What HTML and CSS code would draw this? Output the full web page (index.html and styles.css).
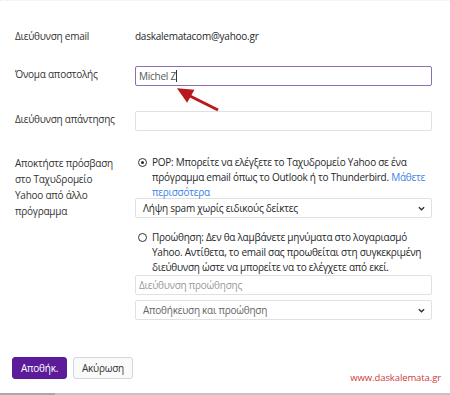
FILE: index.html
```html
<!DOCTYPE html>
<html lang="el">
<head>
    <meta charset="UTF-8">
    <title>Ρυθμίσεις λογαριασμού</title>
    <link rel="stylesheet" href="styles.css">
</head>
<body>
    <div class="page">
        <div class="settings">
            <div class="label">Διεύθυνση email</div>
            <div class="value">daskalematacom@yahoo.gr</div>

            <div class="label label-input">Όνομα αποστολής</div>
            <div class="field">
                <div class="text-input focused">Michel Z<span class="caret"></span></div>
            </div>

            <div class="label label-input">Διεύθυνση απάντησης</div>
            <div class="field">
                <div class="text-input"></div>
            </div>

            <div class="label label-access">Αποκτήστε πρόσβαση στο Ταχυδρομείο Yahoo από άλλο πρόγραμμα</div>
            <div class="field field-access">
                <div class="radio-row">
                    <span class="radio checked"></span>
                    <p>POP: Μπορείτε να ελέγξετε το Ταχυδρομείο Yahoo σε ένα πρόγραμμα email όπως το Outlook ή το Thunderbird. <a href="#">Μάθετε περισσότερα</a></p>
                </div>
                <div class="select select-spam">
                    <span>Λήψη spam χωρίς ειδικούς δείκτες</span>
                    <svg class="chevron" viewBox="0 0 8 5"><path d="M1 1l3 3 3-3"/></svg>
                </div>
                <div class="radio-row radio-forward">
                    <span class="radio"></span>
                    <p>Προώθηση: Δεν θα λαμβάνετε μηνύματα στο λογαριασμό Yahoo. Αντίθετα, το email σας προωθείται στη συγκεκριμένη διεύθυνση ώστε να μπορείτε να το ελέγχετε από εκεί.</p>
                </div>
                <div class="text-input placeholder">Διεύθυνση προώθησης</div>
                <div class="select select-muted">
                    <span>Αποθήκευση και προώθηση</span>
                    <svg class="chevron" viewBox="0 0 8 5"><path d="M1 1l3 3 3-3"/></svg>
                </div>
            </div>
        </div>

        <div class="actions">
            <button class="btn btn-primary">Αποθήκ.</button>
            <button class="btn">Ακύρωση</button>
            <span class="site">www.daskalemata.gr</span>
        </div>

        <svg class="arrow" viewBox="0 0 50 30">
            <line x1="42" y1="25" x2="10" y2="9"/>
            <path d="M4 5 L16 6 L11 15 Z"/>
        </svg>
    </div>
    <div class="bottom-line"></div>
</body>
</html>
```

FILE: styles.css
```css
body {
    margin: 0;
    font-family: 'Open Sans', sans-serif;
    font-size: 10px;
    letter-spacing: -0.25px;
    color: #26282a;
    background: #ffffff;
}

.page {
    position: relative;
    height: 393px;
    border-top: 1px dotted #ececec;
    box-sizing: border-box;
}

.settings {
    display: grid;
    grid-template-columns: 120px 297px;
    padding: 27px 0 0 15px;
    line-height: 16px;
}

.label {
    color: #333;
    padding-right: 18px;
}

.value {
    color: #26282a;
}

.label-input {
    margin-top: 22px;
}

.field {
    margin-top: 22px;
}

.field + .label-input,
.label-input ~ .label-input + .field {
    margin-top: 25px;
}

.label-access,
.field-access {
    margin-top: 24px;
}

.text-input {
    height: 20px;
    line-height: 18px;
    border: 1px solid #dfe1e3;
    border-radius: 2px;
    box-sizing: border-box;
    padding: 0 3px;
    color: #555;
}

.text-input.focused {
    border-color: #8a70b3;
}

.text-input.placeholder {
    color: #9a9a9a;
}

.caret {
    display: inline-block;
    width: 1px;
    height: 12px;
    background: #333;
    vertical-align: -2px;
}

.radio-row {
    display: flex;
    gap: 5px;
    padding-left: 3px;
}

.radio-row p {
    margin: 0;
    line-height: 15px;
}

.radio-row a {
    color: #3d7fe6;
    text-decoration: none;
}

.radio {
    flex: none;
    width: 9px;
    height: 9px;
    margin-top: 3px;
    border: 1px solid #333;
    border-radius: 50%;
    box-sizing: border-box;
    position: relative;
}

.radio.checked::after {
    content: '';
    position: absolute;
    left: 2px;
    top: 2px;
    width: 3px;
    height: 3px;
    border-radius: 50%;
    background: #26282a;
}

.radio-forward {
    margin-top: 12px;
}

.select {
    display: flex;
    align-items: center;
    justify-content: space-between;
    height: 20px;
    padding: 0 6px 0 7px;
    border: 1px solid #dfe1e3;
    border-radius: 2px;
    box-sizing: border-box;
}

.select-spam {
    margin-top: -2px;
}

.select-muted {
    margin-top: 5px;
    color: #666;
}

.chevron {
    width: 7px;
    height: 5px;
    fill: none;
    stroke: #333;
    stroke-width: 1.6;
}

.actions {
    display: flex;
    align-items: center;
    gap: 6px;
    margin-top: 31px;
    padding: 0 9px 0 12px;
}

.btn {
    height: 22px;
    padding: 0 8px;
    font-family: inherit;
    font-size: 10px;
    letter-spacing: -0.25px;
    color: #333;
    background: #fafafa;
    border: 1px solid #d6d6d6;
    border-radius: 3px;
}

.btn-primary {
    color: #fff;
    background: #5c1c9a;
    border-color: #5c1c9a;
}

.site {
    margin-left: auto;
    margin-top: 20px;
    color: #d03a3a;
    font-size: 9.5px;
    letter-spacing: -0.1px;
}

.arrow {
    position: absolute;
    left: 176px;
    top: 84px;
    width: 50px;
    height: 30px;
    stroke: #b8191c;
    fill: #b8191c;
    stroke-width: 3;
}

.bottom-line {
    height: 2px;
    background: linear-gradient(to right, #a9a9a9 55px, #c4c4c4 55px);
}
```
